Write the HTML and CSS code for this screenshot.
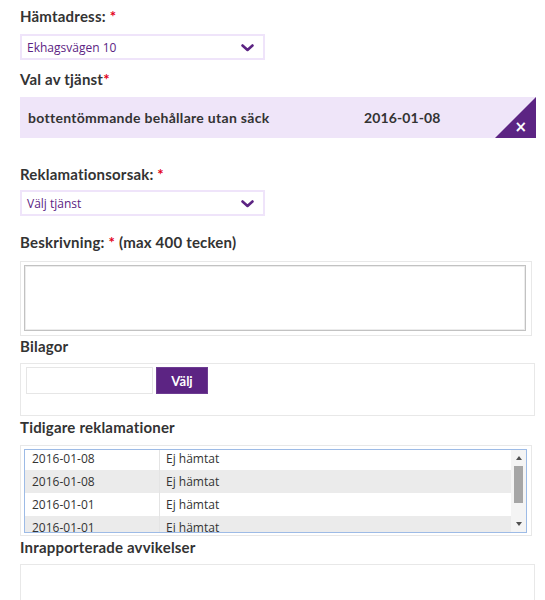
FILE: index.html
```html
<!DOCTYPE html>
<html lang="sv">
<head>
<meta charset="utf-8">
<link rel="stylesheet" href="styles.css">
</head>
<body>
<div class="form">
  <div class="label l1">Hämtadress: <span class="req">*</span></div>
  <div class="select">
    <span>Ekhagsvägen 10</span>
    <svg class="chev" width="13" height="8" viewBox="0 0 13 8"><path d="M1.5 1.5 L6.5 6 L11.5 1.5" fill="none" stroke="#5c2483" stroke-width="2.6" stroke-linecap="round" stroke-linejoin="round"/></svg>
  </div>

  <div class="label l2">Val av tjänst<span class="req">*</span></div>
  <div class="service">
    <span class="sname">bottentömmande behållare utan säck</span>
    <span class="sdate">2016-01-08</span>
    <span class="corner"><span class="x">×</span></span>
  </div>

  <div class="label l3">Reklamationsorsak: <span class="req">*</span></div>
  <div class="select">
    <span>Välj tjänst</span>
    <svg class="chev" width="13" height="8" viewBox="0 0 13 8"><path d="M1.5 1.5 L6.5 6 L11.5 1.5" fill="none" stroke="#5c2483" stroke-width="2.6" stroke-linecap="round" stroke-linejoin="round"/></svg>
  </div>

  <div class="label l4">Beskrivning: <span class="req">*</span> (max 400 tecken)</div>
  <div class="tbox"><div class="tarea"></div></div>

  <div class="label l5">Bilagor</div>
  <div class="abox">
    <div class="ainput"></div>
    <div class="abtn">Välj</div>
  </div>

  <div class="label l6">Tidigare reklamationer</div>
  <div class="lbox">
    <div class="list">
      <div class="rows">
        <div class="row"><span class="c1">2016-01-08</span><span class="c2">Ej hämtat</span></div>
        <div class="row alt"><span class="c1">2016-01-08</span><span class="c2">Ej hämtat</span></div>
        <div class="row"><span class="c1">2016-01-01</span><span class="c2">Ej hämtat</span></div>
        <div class="row alt"><span class="c1">2016-01-01</span><span class="c2">Ej hämtat</span></div>
      </div>
      <div class="sbar">
        <div class="arr up"></div>
        <div class="thumb"></div>
        <div class="sp"></div>
        <div class="arr down"></div>
      </div>
    </div>
  </div>

  <div class="label l7">Inrapporterade avvikelser</div>
  <div class="dbox"></div>
</div>
</body>
</html>
```

FILE: styles.css
```css
html, body {
  margin: 0;
  padding: 0;
  background: #fff;
}
body {
  overflow: hidden;
  height: 600px;
}
.form {
  padding: 7px 0 0 20px;
  width: 520px;
}
.label {
  font-family: Lato, "Liberation Sans", sans-serif;
  font-weight: 700;
  font-size: 15px;
  letter-spacing: 0.2px;
  line-height: 18px;
  color: #333;
  margin-bottom: 9px;
}
.req {
  color: #e3001b;
}
.l2 { margin-top: 10px; }
.l3 { margin-top: 27px; margin-bottom: 7px; }
.l4 { margin-top: 17px; margin-bottom: 10px; }
.l5 { margin-top: 1px; margin-bottom: 8px; }
.l6 { margin-top: 2px; margin-bottom: 9px; }
.l7 { margin-top: 2px; margin-bottom: 8px; }

.select {
  box-sizing: border-box;
  width: 245px;
  height: 26px;
  border: 2px solid #efe4fa;
  background: #fff;
  display: flex;
  align-items: center;
  justify-content: space-between;
  padding: 0 9px 0 5px;
  font-family: "Open Sans", sans-serif;
  font-size: 12px;
  color: #5c2483;
}
.chev { display: block; margin-top: 1px; }

.service {
  box-sizing: border-box;
  width: 516px;
  height: 41px;
  background: #efe5f9;
  display: flex;
  align-items: center;
  padding-left: 8px;
  font-family: Lato, "Liberation Sans", sans-serif;
  font-weight: 700;
  font-size: 14px;
  color: #333;
}
.sname { width: 336px; letter-spacing: 0.3px; }
.sdate { flex: 1; letter-spacing: 0.1px; }
.corner {
  align-self: stretch;
  width: 41px;
  background: #5c2483;
  clip-path: polygon(100% 0, 100% 100%, 0 100%);
  display: flex;
  align-items: flex-end;
  justify-content: flex-end;
  padding: 0 9px 4px 0;
  box-sizing: border-box;
}
.x {
  color: #fff;
  font-family: "DejaVu Sans", sans-serif;
  font-weight: 700;
  font-size: 15px;
  line-height: 14px;
}

.tbox {
  box-sizing: border-box;
  width: 512px;
  height: 75px;
  border: 1px solid #e8e8e8;
  padding: 3px 5px 4px 3px;
}
.tarea {
  box-sizing: border-box;
  height: 66px;
  border: 1px solid #c2c2c2;
  box-shadow: inset 0 0 0 1px #ececec;
}

.abox {
  box-sizing: border-box;
  width: 515px;
  height: 53px;
  border: 1px solid #e8e8e8;
  padding: 3px 0 0 5px;
  display: flex;
  align-items: flex-start;
  gap: 3px;
}
.ainput {
  box-sizing: border-box;
  width: 127px;
  height: 27px;
  border: 1px solid #e6e6e6;
}
.abtn {
  box-sizing: border-box;
  width: 52px;
  height: 27px;
  background: #5c2483;
  border: 1px solid #6d3c92;
  color: #fff;
  font-family: Lato, "Liberation Sans", sans-serif;
  font-weight: 700;
  font-size: 13px;
  display: flex;
  align-items: center;
  justify-content: center;
}

.lbox {
  box-sizing: border-box;
  width: 512px;
  height: 91px;
  border: 1px solid #e8e8e8;
  padding: 3px 4px 2px 3px;
}
.list {
  box-sizing: border-box;
  height: 84px;
  border: 1px solid #9dbbe6;
  display: flex;
  overflow: hidden;
}
.rows {
  flex: 1;
  margin-top: -3px;
  font-family: "Open Sans", sans-serif;
  font-size: 12px;
  color: #333;
}
.row {
  display: flex;
  height: 23px;
  align-items: center;
}
.row.alt { background: #ebebeb; }
.c1 {
  box-sizing: border-box;
  width: 135px;
  padding-left: 7px;
  align-self: stretch;
  display: flex;
  align-items: center;
  border-right: 1px solid #e4e4e4;
}
.c2 { padding-left: 6px; }
.sbar {
  width: 15px;
  background: #f4f4f4;
  display: flex;
  flex-direction: column;
  align-items: center;
}
.arr {
  width: 0;
  height: 0;
  border-left: 3.5px solid transparent;
  border-right: 3.5px solid transparent;
}
.arr.up {
  border-bottom: 4px solid #505050;
  margin-top: 6px;
}
.arr.down {
  border-top: 4px solid #505050;
  margin-bottom: 6px;
}
.thumb {
  width: 9px;
  height: 37px;
  background: #a6a6a6;
  margin-top: 6px;
}
.sp { flex: 1; }

.dbox {
  box-sizing: border-box;
  width: 515px;
  height: 60px;
  border: 1px solid #e8e8e8;
}
```
